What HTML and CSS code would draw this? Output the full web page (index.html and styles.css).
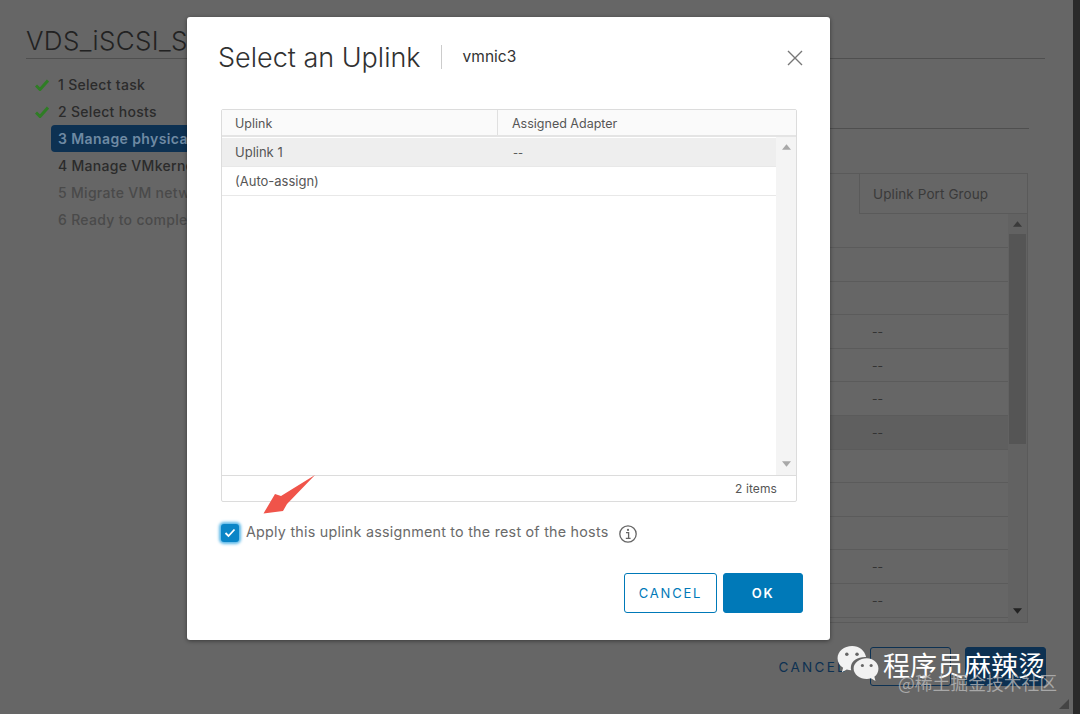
FILE: index.html
```html
<!DOCTYPE html>
<html lang="en">
<head>
<meta charset="utf-8">
<title>Select an Uplink</title>
<link rel="stylesheet" href="styles.css">
</head>
<body>
<div class="page">
  <div class="wizard">
    <h1 class="wizard-title">VDS_iSCSI_Switch</h1>
    <div class="wizard-body">
      <ul class="steps">
        <li class="step done"><svg class="tick" viewBox="0 0 14 12"><path d="M1 6.500 5 10.500 13 1.500" fill="none" stroke="#2f7d25" stroke-width="3"/></svg>1 Select task</li>
        <li class="step done"><svg class="tick" viewBox="0 0 14 12"><path d="M1 6.500 5 10.500 13 1.500" fill="none" stroke="#2f7d25" stroke-width="3"/></svg>2 Select hosts</li>
        <li class="step active">3 Manage physical adapters</li>
        <li class="step">4 Manage VMkernel adapters</li>
        <li class="step off">5 Migrate VM networking</li>
        <li class="step off">6 Ready to complete</li>
      </ul>
      <div class="content">
        <div class="content-rule"></div>
        <div class="bg-table">
          <div class="bg-head"><div class="bg-head-fill"></div><div class="bg-head-cell">Uplink Port Group</div></div>
          <div class="bg-main">
            <div class="bg-rows">
              <div class="bg-row"></div>
              <div class="bg-row"></div>
              <div class="bg-row"></div>
              <div class="bg-row">--</div>
              <div class="bg-row">--</div>
              <div class="bg-row">--</div>
              <div class="bg-row selected">--</div>
              <div class="bg-row"></div>
              <div class="bg-row"></div>
              <div class="bg-row"></div>
              <div class="bg-row">--</div>
              <div class="bg-row">--</div>
            </div>
            <div class="bg-scroll">
              <svg class="arrow-icon" viewBox="0 0 10 6"><path d="M5 0 10 6H0Z" fill="#3a3a3a"/></svg>
              <div class="bg-thumb"></div>
              <svg class="arrow-icon bottom" viewBox="0 0 10 6"><path d="M0 0H10L5 6Z" fill="#222"/></svg>
            </div>
          </div>
        </div>
        <div class="bg-actions">
          <span class="bg-link">CANCEL</span>
          <span class="bg-btn outline"></span>
          <span class="bg-btn solid"></span>
        </div>
      </div>
    </div>
  </div>
  <div class="edge"></div>
  <svg class="grip" viewBox="0 0 10 10"><path d="M10 0V10H0Z" fill="#444"/></svg>

  <section class="modal">
    <header class="modal-head">
      <h2 class="modal-title">Select an Uplink</h2>
      <span class="modal-sub">vmnic3</span>
      <svg class="close" viewBox="0 0 16 16"><path d="M1 1 15 15M15 1 1 15" stroke="#777" stroke-width="1.400" fill="none"/></svg>
    </header>
    <div class="grid">
      <div class="grid-head">
        <div class="col-a">Uplink</div>
        <div class="col-b">Assigned Adapter</div>
      </div>
      <div class="grid-main">
        <div class="grid-rows">
          <div class="grid-row selected"><div class="col-a">Uplink 1</div><div class="col-b">--</div></div>
          <div class="grid-row"><div class="col-a">(Auto-assign)</div><div class="col-b"></div></div>
        </div>
        <div class="grid-scroll">
          <svg class="arrow-icon" viewBox="0 0 10 6"><path d="M5 0 10 6H0Z" fill="#a8a8a8"/></svg>
          <svg class="arrow-icon bottom" viewBox="0 0 10 6"><path d="M0 0H10L5 6Z" fill="#a8a8a8"/></svg>
        </div>
      </div>
      <div class="grid-foot">2 items</div>
    </div>
    <div class="apply">
      <span class="check"><svg viewBox="0 0 12 10"><path d="M1.500 5 4.500 8 10.500 1.500" fill="none" stroke="#fff" stroke-width="1.800"/></svg></span>
      <span class="apply-text">Apply this uplink assignment to the rest of the hosts</span>
      <svg class="info" viewBox="0 0 20 20"><circle cx="10" cy="10" r="8.200" fill="none" stroke="#666" stroke-width="1.300"/><circle cx="10" cy="5.900" r="1.100" fill="#666"/><path d="M8 8.600H10.600V14.200M7.800 14.400H12.600" fill="none" stroke="#666" stroke-width="1.300"/></svg>
    </div>
    <div class="modal-actions">
      <button class="btn btn-outline">CANCEL</button>
      <button class="btn btn-solid">OK</button>
    </div>
  </section>

  <svg class="pointer" viewBox="0 0 54 41"><path d="M52 1 18 22 12 20 .5 39.500 20 37 24 30Z" fill="#f0544a"/></svg>

  <div class="watermark">
    <svg class="wechat" viewBox="0 0 42 38">
      <path d="M15 0C6.700 0 0 5.600 0 12.500 0 16.500 2.200 20 5.700 22.300L4.400 27 9.500 24.200C11 24.700 12.500 25 14 25 13.500 23.500 13.500 22 13.800 20.500 15 14.500 21 10.800 29.300 11.200 28 4.800 22.200 0 15 0Z" fill="#f2f2f2"/>
      <path d="M30 12.500C22.800 12.500 16.500 17 16.500 23 16.500 29 22.800 33.800 30 33.800 31.500 33.800 33 33.500 34.300 33.100L39 36 37.800 31.600C40.500 29.600 42 26.500 42 23 42 17 36.500 12.500 30 12.500Z" fill="#f2f2f2"/>
      <circle cx="9.500" cy="8.500" r="1.800" fill="#666"/><circle cx="20" cy="8.500" r="1.800" fill="#666"/>
      <circle cx="25.500" cy="20" r="1.600" fill="#666"/><circle cx="34.500" cy="20" r="1.600" fill="#666"/>
    </svg>
    <span class="wm-name">程序员麻辣烫</span>
    <span class="wm-site">@稀土掘金技术社区</span>
  </div>
</div>
</body>
</html>
```
FILE: styles.css
```css
* { box-sizing: border-box; }
html, body { margin: 0; padding: 0; }
body { width: 1080px; height: 714px; overflow: hidden; font-family: Inter, "Liberation Sans", sans-serif; }
.page { position: relative; width: 1080px; height: 714px; overflow: hidden; background: #666; }

.wizard { width: 1073px; height: 714px; padding: 26px 28px 0 26px; color: #222; }
.wizard-title { margin: 0; height: 33px; font-size: 26px; font-weight: 300; letter-spacing: .35px; line-height: 30px; color: #222; border-bottom: 1px solid #4f4f4f; white-space: nowrap; overflow: hidden; }
.wizard-body { display: flex; padding-top: 12px; }
.steps { list-style: none; margin: 0; padding: 0; width: 180px; flex: none; }
.step { position: relative; height: 27px; margin-left: 25px; padding-left: 7px; line-height: 27px; font-size: 14px; font-weight: 500; letter-spacing: .3px; color: #2b2b2b; white-space: nowrap; }
.step.off { color: #4a4a4a; }
.step.active { background: #0d3152; color: #6f8aa3; border-radius: 4px; font-weight: 600; letter-spacing: .4px; }
.tick { position: absolute; left: -16px; top: 8px; width: 14px; height: 12px; }
.content { flex: 1; min-width: 0; padding-top: 57px; }
.content-rule { margin-right: 16px; height: 1px; background: #4f4f4f; }
.bg-table { margin-top: 44px; margin-right: 17px; border-bottom: 1px solid #5a5a5a; border-right: 1px solid #5a5a5a; }
.bg-head { display: flex; height: 41px; border-top: 1px solid #5a5a5a; }
.bg-head-fill { flex: 1; }
.bg-head-cell { width: 168px; padding-left: 13px; line-height: 40px; font-size: 13.500px; letter-spacing: .1px; color: #3a3a3a; border-left: 1px solid #5a5a5a; border-bottom: 1px solid #5a5a5a; }
.bg-main { display: flex; height: 408px; }
.bg-rows { flex: 1; padding-top: .5px; }
.bg-row { height: 33.600px; padding-left: 666px; line-height: 34px; font-size: 12px; color: #333; border-bottom: 1px solid #5b5b5b; }
.bg-row.selected { background: #5f5f5f; }
.bg-scroll { position: relative; width: 19px; background: #626262; display: flex; flex-direction: column; align-items: center; }
.bg-thumb { width: 17px; height: 210px; margin-top: 7px; background: #555; }
.arrow-icon { display: block; width: 9px; height: 6px; margin-top: 7px; flex: none; }
.arrow-icon.bottom { margin-top: auto; margin-bottom: 8px; }
.bg-actions { display: flex; justify-content: flex-end; align-items: center; margin-top: 24px; margin-right: -1px; gap: 14px; }
.bg-link { margin-right: 9px; font-size: 13.500px; letter-spacing: 2.300px; color: #0d3152; }
.bg-btn { width: 81px; height: 39px; border: 1px solid #0d3152; border-radius: 3px; }
.bg-btn.solid { background: #0d3152; }
.edge { position: absolute; top: 0; right: 0; width: 7px; height: 714px; background: #2a2a2a; }
.grip { position: absolute; left: 1059px; top: 699px; width: 10px; height: 10px; }

.modal { position: absolute; left: 187px; top: 17px; width: 643px; height: 623px; padding: 0 27px 0 34px; background: #fff; border-radius: 3px; box-shadow: 0 1px 4px rgba(0, 0, 0, .45); }
.modal-head { display: flex; align-items: center; height: 80px; }
.modal-title { margin: 0 0 0 -3px; padding-right: 20px; font-size: 27px; font-weight: 300; color: #313131; white-space: nowrap; }
.modal-sub { height: 24px; padding-left: 21px; line-height: 24px; font-size: 15.500px; color: #333; border-left: 1px solid #ccc; }
.close { width: 16px; height: 16px; margin-left: auto; margin-top: 2px; }
.grid { display: flex; flex-direction: column; width: 576px; height: 393px; margin-top: 12px; border: 1px solid #dcdcdc; border-radius: 2px; }
.grid-head { display: flex; flex: none; height: 27px; line-height: 27px; font-size: 12.500px; color: #565656; background: #fafafa; border-bottom: 2px solid #e4e4e4; }
.col-a { width: 276px; padding-left: 13px; flex: none; }
.col-b { flex: 1; padding-left: 14px; }
.grid-head .col-a { border-right: 1px solid #e0e0e0; }
.grid-main { display: flex; flex: 1; min-height: 0; }
.grid-rows { flex: 1; padding-top: 1px; }
.grid-row { display: flex; height: 29px; line-height: 28px; font-size: 13px; color: #565656; border-bottom: 1px solid #e8e8e8; }
.grid-row.selected { background: #eeeeee; }
.grid-row .col-b { padding-left: 15px; font-size: 11px; line-height: 30px; }
.grid-scroll { width: 20px; flex: none; background: #f4f4f4; display: flex; flex-direction: column; align-items: center; }
.grid-foot { flex: none; height: 26px; padding-right: 19px; text-align: right; line-height: 25px; font-size: 12px; letter-spacing: .1px; color: #565656; border-top: 1px solid #dcdcdc; }
.apply { display: flex; align-items: center; margin-top: 21px; height: 20px; }
.check { display: flex; align-items: center; justify-content: center; width: 18px; height: 18px; background: #0a85c7; border-radius: 3px; box-shadow: 0 0 3px 2px #5cb8e8; }
.check svg { width: 12px; height: 10px; }
.apply-text { margin: 0 0 3px 7px; font-size: 14.300px; letter-spacing: .24px; color: #6a6a6a; white-space: nowrap; }
.info { width: 20px; height: 20px; margin-left: 10px; margin-top: 1px; }
.modal-actions { display: flex; justify-content: flex-end; gap: 6px; margin-top: 30px; }
.btn { height: 40px; padding: 0; font-family: inherit; font-size: 13px; font-weight: 400; letter-spacing: 1.800px; border-radius: 3px; }
.btn-outline { width: 93px; color: #0079b8; background: #fff; border: 1px solid #0079b8; }
.btn-solid { width: 80px; color: #fff; background: #0079b8; border: 1px solid #0079b8; font-weight: 600; }

.pointer { position: absolute; left: 263px; top: 474px; width: 54px; height: 41px; }
.watermark { position: absolute; left: 837px; top: 645px; width: 225px; height: 52px; }
.wechat { position: absolute; left: 0; top: 1px; width: 42px; height: 37px; }
.wm-name { position: absolute; left: 46px; top: 2px; font-family: "Noto Sans CJK SC", sans-serif; font-size: 27px; line-height: 36px; color: #fff; white-space: nowrap; }
.wm-site { position: absolute; left: 61px; top: 26px; font-family: "Noto Sans CJK SC", sans-serif; font-size: 17.800px; line-height: 22px; color: rgba(190, 190, 190, .75); white-space: nowrap; }
```
